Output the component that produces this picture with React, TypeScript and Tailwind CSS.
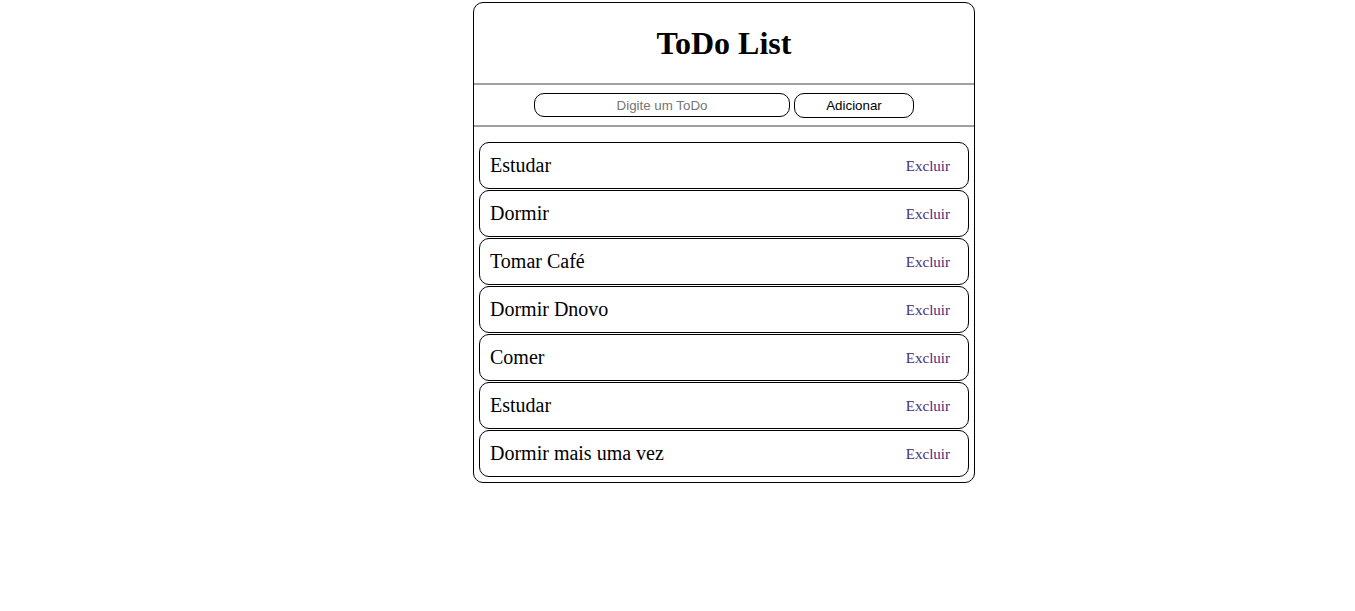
import React, { useState } from 'react';

const initialTodos = [
  'Estudar',
  'Dormir',
  'Tomar Café',
  'Dormir Dnovo',
  'Comer',
  'Estudar',
  'Dormir mais uma vez',
];

const App = () => {
  const [todos, setTodos] = useState(initialTodos);
  const [text, setText] = useState('');

  const addTodo = () => {
    if (!text.trim()) return;
    setTodos([...todos, text]);
    setText('');
  };

  const removeTodo = (index: number) => {
    setTodos(todos.filter((_, i) => i !== index));
  };

  return (
    <div className="min-h-screen bg-white pt-[2px]">
      <div className="ml-[473px] w-[502px] rounded-[10px] border border-black bg-white">
        {/* Header */}
        <div className="flex h-[82px] items-center justify-center border-b-2 border-[#a0a0a0]">
          <h1 className="text-[32px] font-bold text-black" style={{ fontFamily: '"Liberation Serif", serif' }}>
            ToDo List
          </h1>
        </div>

        {/* Input */}
        <div className="flex h-[42px] items-start justify-center gap-[4px] border-b-2 border-[#a0a0a0] pt-[8px]">
          <input
            value={text}
            onChange={(e) => setText(e.target.value)}
            placeholder="Digite um ToDo"
            className="h-[24px] w-[256px] rounded-[10px] border border-black px-2 text-center text-[13.33px] text-black outline-none placeholder:text-[#757575]"
            style={{ fontFamily: '"Liberation Sans", Arial, sans-serif' }}
          />
          <button
            onClick={addTodo}
            className="h-[25px] w-[120px] rounded-[10px] border border-black bg-white text-[13.33px] text-black"
            style={{ fontFamily: '"Liberation Sans", Arial, sans-serif' }}
          >
            Adicionar
          </button>
        </div>

        {/* List */}
        <div className="flex flex-col gap-[1px] px-[5px] pb-[5px] pt-[15px]">
          {todos.map((todo, i) => (
            <div
              key={i}
              className="flex h-[47px] items-center justify-between rounded-[10px] border border-black pl-[10px] pr-[18px]"
              style={{ fontFamily: '"Liberation Serif", serif' }}
            >
              <span className="mb-[2px] text-[20px] text-black">{todo}</span>
              <button onClick={() => removeTodo(i)} className="mt-[2px] text-[15px] text-[#4b2a7d]">
                Excluir
              </button>
            </div>
          ))}
        </div>
      </div>
    </div>
  );
};

export default App;
